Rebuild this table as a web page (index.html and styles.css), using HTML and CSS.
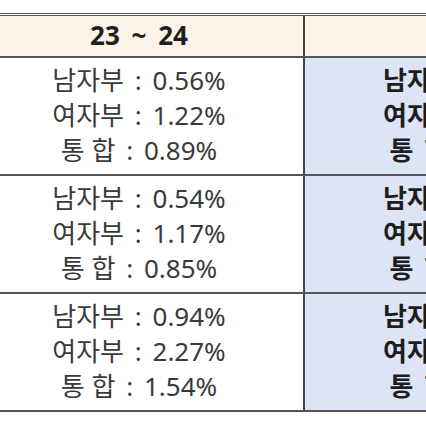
FILE: index.html
```html
<!DOCTYPE html>
<html lang="ko">
<head>
<meta charset="utf-8">
<link rel="stylesheet" href="styles.css">
</head>
<body>
<div class="sheet">
  <div class="table">
    <div class="cell head left">23 ~ 24</div>
    <div class="cell head right"></div>

    <div class="cell body left">
      <div class="line">남자부 : 0.56%</div>
      <div class="line">여자부 : 1.22%</div>
      <div class="line"><span class="tight">통 합</span> : 0.89%</div>
    </div>
    <div class="cell body right">
      <div class="line">남자부 : 0.61%</div>
      <div class="line">여자부 : 1.30%</div>
      <div class="line">통 합 : 0.95%</div>
    </div>

    <div class="cell body left">
      <div class="line">남자부 : 0.54%</div>
      <div class="line">여자부 : 1.17%</div>
      <div class="line"><span class="tight">통 합</span> : 0.85%</div>
    </div>
    <div class="cell body right">
      <div class="line">남자부 : 0.58%</div>
      <div class="line">여자부 : 1.24%</div>
      <div class="line">통 합 : 0.90%</div>
    </div>

    <div class="cell body left last">
      <div class="line">남자부 : 0.94%</div>
      <div class="line">여자부 : 2.27%</div>
      <div class="line"><span class="tight">통 합</span> : 1.54%</div>
    </div>
    <div class="cell body right last">
      <div class="line">남자부 : 1.01%</div>
      <div class="line">여자부 : 2.40%</div>
      <div class="line">통 합 : 1.66%</div>
    </div>
  </div>
</div>
</body>
</html>
```
FILE: styles.css
```css
html, body {
  margin: 0;
  padding: 0;
  background: #ffffff;
}
body {
  width: 426px;
  height: 426px;
  overflow: hidden;
  font-family: "Noto Sans", "Noto Sans CJK KR", sans-serif;
}
.sheet {
  padding-top: 13px;
}
.table {
  display: grid;
  grid-template-columns: 330px 332px;
  width: 662px;
  margin-left: -25px;
  border-top: 3px double #5a5a5a;
  border-bottom: 2px solid #555555;
}
.cell {
  text-align: center;
  box-sizing: border-box;
}
.left {
  border-right: 2px solid #444444;
}
.head {
  height: 42px;
  background: #fbf3e7;
  border-bottom: 2px solid #555555;
  font-weight: bold;
  font-size: 26px;
  line-height: 38px;
  word-spacing: 5px;
  color: #1e1e1e;
}
.body {
  height: 118px;
  padding-top: 5px;
  border-bottom: 2px solid #555555;
  font-size: 26px;
  line-height: 35px;
  word-spacing: 4px;
  color: #3a3a3a;
}
.body.last {
  height: 116px;
  border-bottom: none;
}
.body.right {
  background: #dde4f6;
  font-weight: bold;
  color: #1e1e1e;
}
.line {
  white-space: nowrap;
}
.tight {
  word-spacing: 0;
}
```
